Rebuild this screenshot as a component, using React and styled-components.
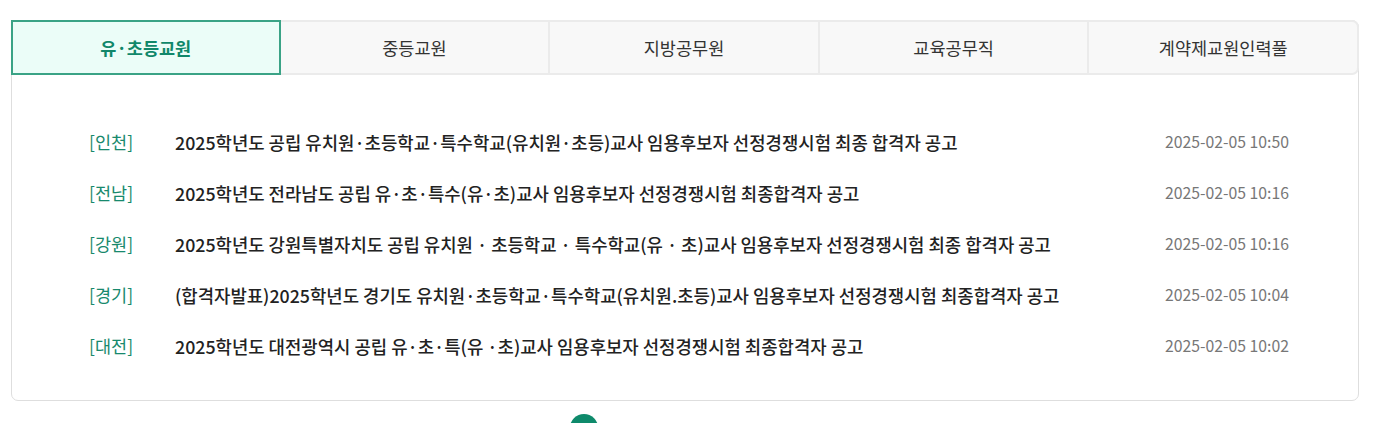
import React from 'react';
import styled, { createGlobalStyle } from 'styled-components';

const GlobalStyle = createGlobalStyle`
  html, body {
    margin: 0;
    padding: 0;
    background: #fff;
    font-family: "Noto Sans CJK KR", "Noto Sans", sans-serif;
    color: #222;
  }
`;

const Page = styled.div`
  padding: 20px 23px 0 11px;
`;

const Board = styled.div`
  border: 1px solid #dedede;
  border-radius: 7px;
  height: 381px;
  box-sizing: border-box;
  display: flex;
  flex-direction: column;
`;

const Tabs = styled.ul`
  display: grid;
  grid-template-columns: repeat(5, 1fr);
  margin: -1px -1px 0 -1px;
  padding: 0;
  list-style: none;
`;

const Tab = styled.li`
  height: 55px;
  box-sizing: border-box;
  display: flex;
  align-items: center;
  justify-content: center;
  font-size: 17.5px;
  cursor: pointer;
  border: 2px solid ${p => (p.$active ? '#3aa386' : '#ebebeb')};
  margin-left: ${p => (p.$first ? '0' : '-2px')};
  background: ${p => (p.$active ? '#ebfdf8' : '#f8f8f8')};
  color: ${p => (p.$active ? '#10876a' : '#333')};
  font-weight: ${p => (p.$active ? 700 : 400)};
  position: ${p => (p.$active ? 'relative' : 'static')};
  z-index: ${p => (p.$active ? 1 : 0)};
  &:last-child {
    border-radius: 0 7px 7px 0;
  }
`;

const List = styled.ul`
  margin: 0;
  padding: 41px 69px 0 77px;
  list-style: none;
`;

const Item = styled.li`
  display: flex;
  align-items: center;
  height: 51px;
`;

const Region = styled.span`
  width: 86px;
  flex: none;
  color: #18896d;
  font-size: 17.5px;
`;

const Title = styled.a`
  flex: 1;
  color: #222;
  font-size: 17.8px;
  font-weight: 500;
  text-decoration: none;
  white-space: nowrap;
`;

const Date = styled.span`
  color: #777;
  font-size: 15.8px;
  flex: none;
`;

const Pager = styled.div`
  display: flex;
  justify-content: center;
  align-items: flex-start;
  gap: 210px;
  margin-top: 13px;
  padding-left: 12px;
`;

const PageNum = styled.span`
  width: 28px;
  height: 28px;
  border-radius: 50%;
  background: ${p => (p.$active ? '#0e8a6b' : 'transparent')};
  color: ${p => (p.$active ? '#fff' : '#999')};
  font-size: 14px;
  display: flex;
  align-items: center;
  justify-content: center;
`;

const Arrow = styled.span`
  color: #bbb;
  font-size: 14px;
  line-height: 1;
  margin-top: 4px;
`;

const tabs = ['유·초등교원', '중등교원', '지방공무원', '교육공무직', '계약제교원인력풀'];

const posts = [
  { region: '인천', title: '2025학년도 공립 유치원·초등학교·특수학교(유치원·초등)교사 임용후보자 선정경쟁시험 최종 합격자 공고', date: '2025-02-05 10:50' },
  { region: '전남', title: '2025학년도 전라남도 공립 유·초·특수(유·초)교사 임용후보자 선정경쟁시험 최종합격자 공고', date: '2025-02-05 10:16' },
  { region: '강원', title: '2025학년도 강원특별자치도 공립 유치원 · 초등학교 · 특수학교(유 · 초)교사 임용후보자 선정경쟁시험 최종 합격자 공고', date: '2025-02-05 10:16' },
  { region: '경기', title: '(합격자발표)2025학년도 경기도 유치원·초등학교·특수학교(유치원.초등)교사 임용후보자 선정경쟁시험 최종합격자 공고', date: '2025-02-05 10:04' },
  { region: '대전', title: '2025학년도 대전광역시 공립 유·초·특(유 ·초)교사 임용후보자 선정경쟁시험 최종합격자 공고', date: '2025-02-05 10:02' },
];

export default function App() {
  return (
    <Page>
      <GlobalStyle />
      <Board>
        <Tabs>
          {tabs.map((t, i) => (
            <Tab key={t} $active={i === 0} $first={i === 0}>{t}</Tab>
          ))}
        </Tabs>
        <List>
          {posts.map(p => (
            <Item key={p.region}>
              <Region>[{p.region}]</Region>
              <Title href="#">{p.title}</Title>
              <Date>{p.date}</Date>
            </Item>
          ))}
        </List>
      </Board>
      <Pager>
        <PageNum $active>1</PageNum>
        <Arrow>›</Arrow>
      </Pager>
    </Page>
  );
}
